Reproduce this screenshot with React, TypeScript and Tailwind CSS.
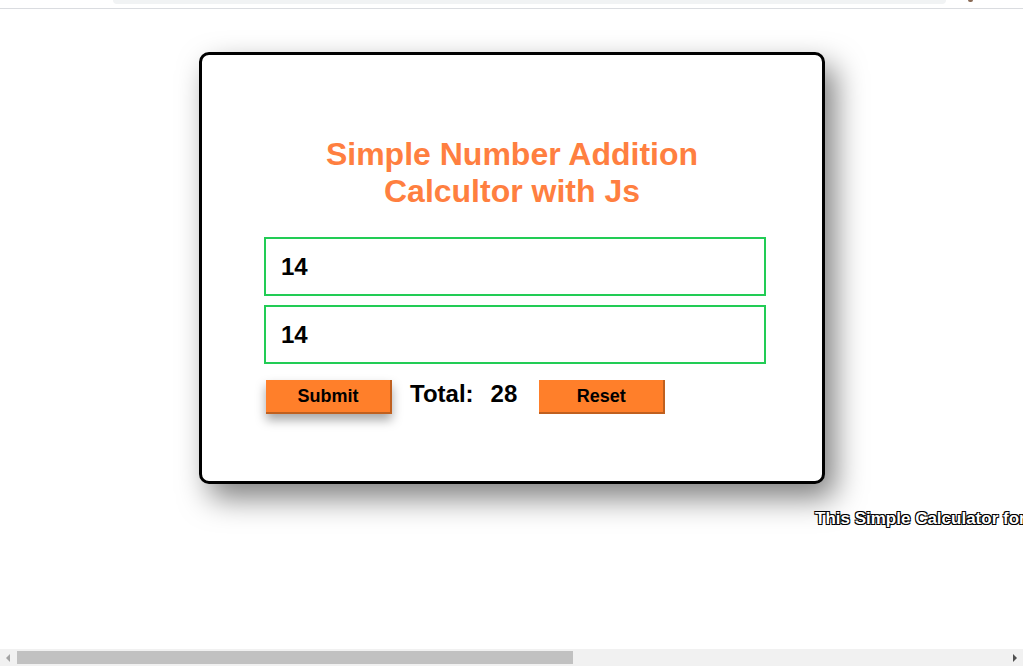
import React from "react";

export default function App() {
  return (
    <div className="w-[1023px] h-[666px] overflow-hidden flex flex-col bg-white font-['Liberation_Sans',Arial,sans-serif]">
      {/* browser chrome remnant */}
      <div className="h-[9px] shrink-0 border-b border-[#dadce0] flex items-start">
        <div className="ml-[113px] w-[833px] h-[4px] rounded-b-[8px] bg-[#f1f3f4]" />
        <div className="ml-[22px] w-[5px] h-[2px] rounded-b-full bg-[#8a6a55]" />
      </div>

      <main className="flex-1 min-h-0 flex flex-col">
        <div className="ml-[199px] mt-[43px] w-[626px] h-[432px] shrink-0 bg-white border-[3px] border-black rounded-[10px] [box-shadow:10px_14px_30px_rgba(0,0,0,0.5)] flex flex-col">
          <h1 className="pt-[81px] text-center text-[32px] leading-[37px] font-bold text-[#ff7f40]">
            Simple Number Addition
            <br />
            Calcultor with Js
          </h1>

          <div className="ml-[62px] w-[502px] mt-[27px] flex flex-col">
            <div className="h-[59px] border-2 border-[#22cc55] flex items-center pl-[15px] text-[24px] font-bold text-black">
              14
            </div>
            <div className="h-[59px] mt-[9px] border-2 border-[#22cc55] flex items-center pl-[15px] text-[24px] font-bold text-black">
              14
            </div>

            <div className="mt-[16px] pl-[2px] flex items-start">
              <div className="w-[126px] h-[34px] pt-[1px] bg-[#ff7f2a] border-r-2 border-b-2 border-[#c0601f] flex items-center justify-center text-[18px] font-bold text-black [box-shadow:0_6px_10px_rgba(0,0,0,0.35)]">
                Submit
              </div>
              <div className="ml-[18px] text-[24px] leading-[28px] font-bold text-black">Total:</div>
              <div className="ml-[17px] text-[24px] leading-[28px] font-bold text-black">28</div>
              <div className="ml-[22px] w-[126px] h-[34px] pt-[1px] bg-[#ff7f2a] border-r-2 border-b-2 border-[#c0601f] flex items-center justify-center text-[18px] font-bold text-black">
                Reset
              </div>
            </div>
          </div>
        </div>

        <div className="mt-[25px] pl-[815px] whitespace-nowrap text-[17px] leading-[20px] font-bold text-white [text-shadow:-1px_-1px_0_#000,1px_-1px_0_#000,-1px_1px_0_#000,1px_1px_0_#000]">
          This Simple Calculator for Addition of two numbers using JavaScript
        </div>
      </main>

      {/* horizontal scrollbar */}
      <div className="h-[17px] shrink-0 bg-[#f1f1f1] flex items-center">
        <div className="w-[17px] h-full flex items-center justify-center">
          <svg width="5" height="8" viewBox="0 0 5 8">
            <path d="M4 0 L0 4 L4 8 Z" fill="#a3a3a3" />
          </svg>
        </div>
        <div className="w-[556px] h-[13px] bg-[#c1c1c1]" />
        <div className="flex-1" />
        <div className="w-[17px] h-full flex items-center justify-center">
          <svg width="5" height="8" viewBox="0 0 5 8">
            <path d="M1 0 L5 4 L1 8 Z" fill="#505050" />
          </svg>
        </div>
      </div>
    </div>
  );
}
